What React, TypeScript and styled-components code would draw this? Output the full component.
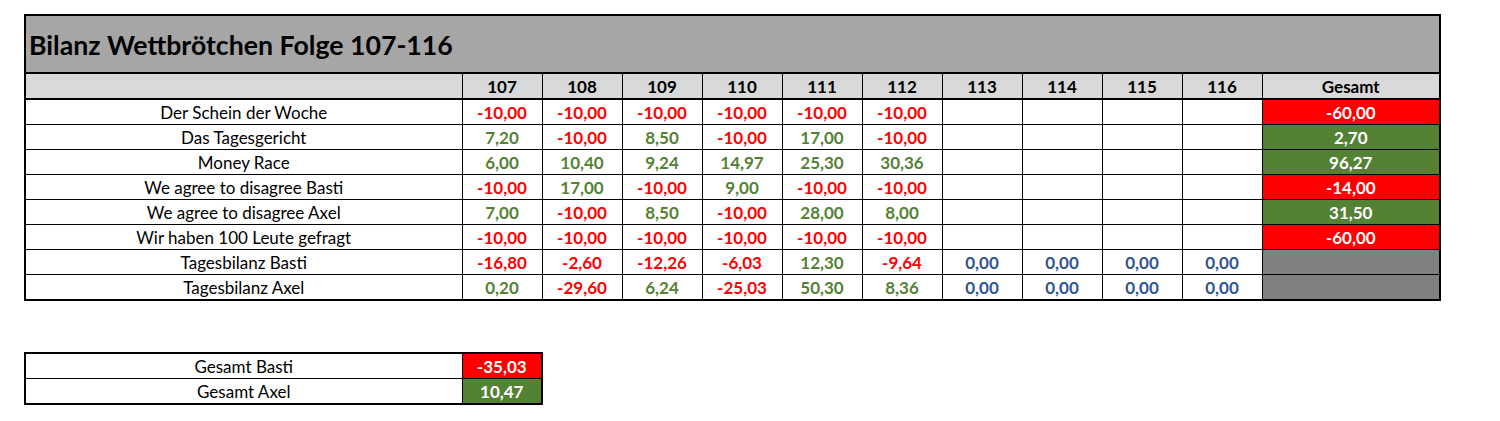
import React from "react"
import styled, { createGlobalStyle } from "styled-components"

type Tone = "neg" | "pos" | "zero"

const GlobalStyle = createGlobalStyle`
    html, body {
        margin: 0;
        padding: 0;
        background: #fff;
    }
    body {
        font-family: Lato, "Open Sans", sans-serif;
        color: #000;
    }
`

const Page = styled.div`
    padding: 14px 0 0 24px;
    display: flex;
    flex-direction: column;
    gap: 51px;
`

const Sheet = styled.table`
    border-collapse: collapse;
    table-layout: fixed;
    width: 1415px;
    border: 2px solid #000;
    font-size: 17px;
`

const TitleCell = styled.th`
    height: 53px;
    padding: 3px 0 0 3px;
    background: #a6a6a6;
    border-bottom: 2px solid #000;
    text-align: left;
    font-size: 26.7px;
    font-weight: 700;
    line-height: 1;
`

const HeadCell = styled.th`
    height: 24px;
    padding: 0;
    background: #d9d9d9;
    border: 1px solid #000;
    border-bottom: 2px solid #000;
    font-weight: 700;
    text-align: center;
    line-height: 1;
`

const LabelCell = styled.td`
    height: 24px;
    padding: 0;
    border: 1px solid #000;
    text-align: center;
    font-weight: 400;
    line-height: 1;
`

const toneColor: Record<Tone, string> = {
    neg: "#ff0000",
    pos: "#548235",
    zero: "#2f5597",
}

const ValueCell = styled.td<{ $tone?: Tone }>`
    height: 24px;
    padding: 0;
    border: 1px solid #000;
    text-align: center;
    font-weight: 700;
    line-height: 1;
    color: ${(p) => (p.$tone ? toneColor[p.$tone] : "#000")};
`

const TotalCell = styled.td<{ $tone?: Tone }>`
    height: 24px;
    padding: 0;
    border: 1px solid #000;
    text-align: center;
    font-weight: 700;
    line-height: 1;
    color: #fff;
    background: ${(p) => (!p.$tone ? "#808080" : p.$tone === "neg" ? "#ff0000" : "#548235")};
`

const Summary = styled.table`
    border-collapse: collapse;
    table-layout: fixed;
    width: 517px;
    border: 2px solid #000;
    font-size: 17px;
`

const episodes = [107, 108, 109, 110, 111, 112, 113, 114, 115, 116]

type Row = { label: string; values: (number | null)[]; total: number | null }

const rows: Row[] = [
    { label: "Der Schein der Woche", values: [-10, -10, -10, -10, -10, -10, null, null, null, null], total: -60 },
    { label: "Das Tagesgericht", values: [7.2, -10, 8.5, -10, 17, -10, null, null, null, null], total: 2.7 },
    { label: "Money Race", values: [6, 10.4, 9.24, 14.97, 25.3, 30.36, null, null, null, null], total: 96.27 },
    { label: "We agree to disagree Basti", values: [-10, 17, -10, 9, -10, -10, null, null, null, null], total: -14 },
    { label: "We agree to disagree Axel", values: [7, -10, 8.5, -10, 28, 8, null, null, null, null], total: 31.5 },
    { label: "Wir haben 100 Leute gefragt", values: [-10, -10, -10, -10, -10, -10, null, null, null, null], total: -60 },
    { label: "Tagesbilanz Basti", values: [-16.8, -2.6, -12.26, -6.03, 12.3, -9.64, 0, 0, 0, 0], total: null },
    { label: "Tagesbilanz Axel", values: [0.2, -29.6, 6.24, -25.03, 50.3, 8.36, 0, 0, 0, 0], total: null },
]

const totals = [
    { label: "Gesamt Basti", value: -35.03 },
    { label: "Gesamt Axel", value: 10.47 },
]

const fmt = (n: number) => n.toFixed(2).replace(".", ",")
const toneOf = (n: number): Tone => (n < 0 ? "neg" : n > 0 ? "pos" : "zero")

export default function App() {
    return (
        <>
            <GlobalStyle />
            <Page>
                <Sheet>
                    <colgroup>
                        <col style={{ width: 437 }} />
                        {episodes.map((e) => (
                            <col key={e} style={{ width: 80 }} />
                        ))}
                        <col style={{ width: 178 }} />
                    </colgroup>
                    <thead>
                        <tr>
                            <TitleCell colSpan={12}>Bilanz Wettbrötchen Folge 107-116</TitleCell>
                        </tr>
                        <tr>
                            <HeadCell />
                            {episodes.map((e) => (
                                <HeadCell key={e}>{e}</HeadCell>
                            ))}
                            <HeadCell>Gesamt</HeadCell>
                        </tr>
                    </thead>
                    <tbody>
                        {rows.map((row) => (
                            <tr key={row.label}>
                                <LabelCell>{row.label}</LabelCell>
                                {row.values.map((v, i) => (
                                    <ValueCell key={i} $tone={v === null ? undefined : toneOf(v)}>
                                        {v === null ? "" : fmt(v)}
                                    </ValueCell>
                                ))}
                                <TotalCell $tone={row.total === null ? undefined : toneOf(row.total)}>
                                    {row.total === null ? "" : fmt(row.total)}
                                </TotalCell>
                            </tr>
                        ))}
                    </tbody>
                </Sheet>
                <Summary>
                    <colgroup>
                        <col style={{ width: 437 }} />
                        <col style={{ width: 80 }} />
                    </colgroup>
                    <tbody>
                        {totals.map((t) => (
                            <tr key={t.label}>
                                <LabelCell>{t.label}</LabelCell>
                                <TotalCell $tone={toneOf(t.value)}>{fmt(t.value)}</TotalCell>
                            </tr>
                        ))}
                    </tbody>
                </Summary>
            </Page>
        </>
    )
}
